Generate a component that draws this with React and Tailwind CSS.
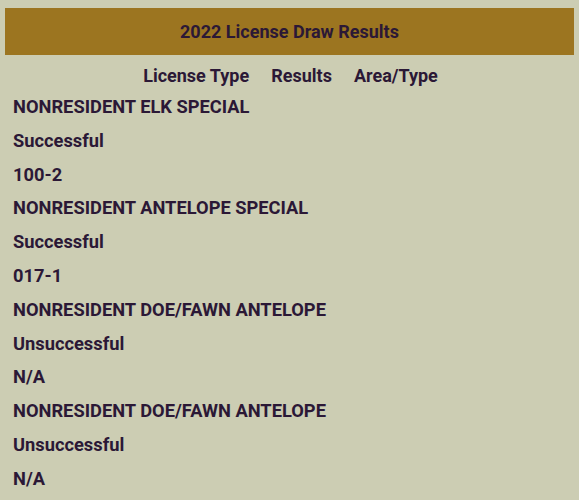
const rows = [
  'NONRESIDENT ELK SPECIAL',
  'Successful',
  '100-2',
  'NONRESIDENT ANTELOPE SPECIAL',
  'Successful',
  '017-1',
  'NONRESIDENT DOE/FAWN ANTELOPE',
  'Unsuccessful',
  'N/A',
  'NONRESIDENT DOE/FAWN ANTELOPE',
  'Unsuccessful',
  'N/A',
];

export default function App() {
  return (
    <div className="min-h-[500px] bg-[#cccdb3] px-[5px] pt-2 font-['Roboto',sans-serif] font-bold text-[#2b1836]">
      <div className="flex h-[47px] items-center justify-center bg-[#9c7520] text-[18px]">
        2022 License Draw Results
      </div>
      <div className="mt-[9px] flex justify-center gap-[22px] pl-[2px] text-[18px] leading-[24px]">
        <span>License Type</span>
        <span>Results</span>
        <span>Area/Type</span>
      </div>
      <div className="mt-[2px] px-2 text-[18.3px]">
        {rows.map((r, i) => (
          <div key={i} className="h-[33.8px] leading-[33.8px]">{r}</div>
        ))}
      </div>
    </div>
  );
}
